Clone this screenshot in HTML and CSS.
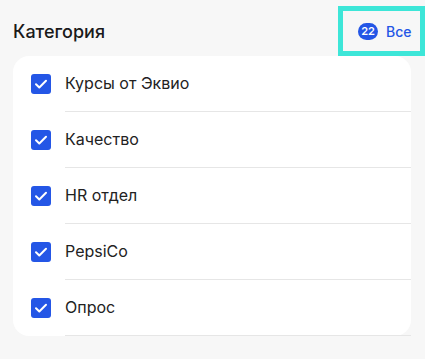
FILE: index.html
```html
<!DOCTYPE html>
<html lang="ru">
<head>
<meta charset="utf-8">
<link rel="stylesheet" href="styles.css">
</head>
<body>
<div class="panel">
  <div class="header">
    <h2 class="title">Категория</h2>
    <button class="all-btn"><span class="badge">22</span><span class="all-text">Все</span></button>
  </div>
  <ul class="card">
    <li class="row"><span class="check"><svg viewBox="0 0 20 20" width="20" height="20"><path d="M5 10.3l3.3 3.2L15 6.8" fill="none" stroke="#fff" stroke-width="2" stroke-linecap="round" stroke-linejoin="round"/></svg></span><span class="label">Курсы от Эквио</span></li>
    <li class="row"><span class="check"><svg viewBox="0 0 20 20" width="20" height="20"><path d="M5 10.3l3.3 3.2L15 6.8" fill="none" stroke="#fff" stroke-width="2" stroke-linecap="round" stroke-linejoin="round"/></svg></span><span class="label">Качество</span></li>
    <li class="row"><span class="check"><svg viewBox="0 0 20 20" width="20" height="20"><path d="M5 10.3l3.3 3.2L15 6.8" fill="none" stroke="#fff" stroke-width="2" stroke-linecap="round" stroke-linejoin="round"/></svg></span><span class="label">HR отдел</span></li>
    <li class="row"><span class="check"><svg viewBox="0 0 20 20" width="20" height="20"><path d="M5 10.3l3.3 3.2L15 6.8" fill="none" stroke="#fff" stroke-width="2" stroke-linecap="round" stroke-linejoin="round"/></svg></span><span class="label">PepsiCo</span></li>
    <li class="row"><span class="check"><svg viewBox="0 0 20 20" width="20" height="20"><path d="M5 10.3l3.3 3.2L15 6.8" fill="none" stroke="#fff" stroke-width="2" stroke-linecap="round" stroke-linejoin="round"/></svg></span><span class="label">Опрос</span></li>
  </ul>
</div>
</body>
</html>
```
FILE: styles.css
```css
* { box-sizing: border-box; }
html, body {
  margin: 0;
  padding: 0;
  background: #f7f7f7;
  font-family: Inter, "Noto Sans", sans-serif;
}
.panel {
  width: 425px;
}
.header {
  display: flex;
  align-items: center;
  justify-content: space-between;
  padding-top: 6px;
  padding-left: 13px;
}
.title {
  margin: 0;
  padding-top: 1px;
  font-size: 18px;
  font-weight: 500;
  color: #1a1a1a;
}
.all-btn {
  width: 87px;
  height: 50px;
  display: flex;
  align-items: center;
  gap: 8px;
  padding: 0 0 0 15px;
  border: 5px solid #3de6d8;
  background: transparent;
  font-family: inherit;
  cursor: pointer;
}
.badge {
  width: 20px;
  height: 17px;
  border-radius: 9px;
  background: #2456e6;
  color: #fff;
  font-size: 11px;
  font-weight: 600;
  display: flex;
  align-items: center;
  justify-content: center;
}
.all-text {
  font-size: 14px;
  font-weight: 500;
  color: #2456e6;
}
.card {
  list-style: none;
  margin: 0 14px 0 13px;
  padding: 0;
  background: #fff;
  border-radius: 16px;
}
.row {
  height: 56px;
  display: flex;
  align-items: center;
}
.check {
  width: 20px;
  height: 20px;
  margin-left: 18px;
  margin-right: 14px;
  border-radius: 3px;
  background: #2456e6;
  display: flex;
  flex-shrink: 0;
}
.label {
  flex: 1;
  align-self: stretch;
  display: flex;
  align-items: center;
  border-bottom: 1px solid #e6e6e6;
  font-size: 16px;
  color: #222;
  padding-bottom: 1px;
}
```
